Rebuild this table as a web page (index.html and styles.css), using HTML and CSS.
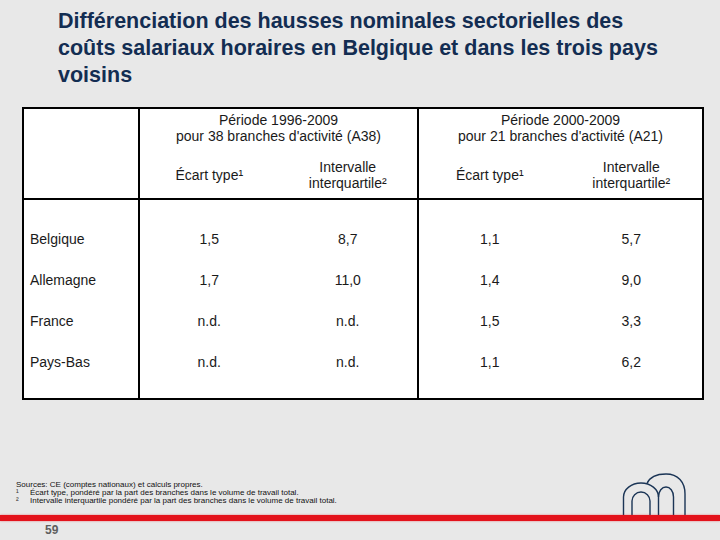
FILE: index.html
```html
<!DOCTYPE html>
<html lang="fr">
<head>
<meta charset="utf-8">
<title>Différenciation des hausses nominales</title>
<link rel="stylesheet" href="styles.css">
</head>
<body>
<div class="slide">
  <h1 class="title">Différenciation des hausses nominales sectorielles des coûts salariaux horaires en Belgique et dans les trois pays voisins</h1>

  <table class="data">
    <colgroup>
      <col class="c-label">
      <col class="c-a">
      <col class="c-a">
      <col class="c-b">
      <col class="c-b">
    </colgroup>
    <thead>
      <tr class="h1">
        <th rowspan="2" class="corner"></th>
        <th colspan="2" class="grp">Période 1996-2009<br>pour 38 branches d'activité (A38)</th>
        <th colspan="2" class="grp">Période 2000-2009<br>pour 21 branches d'activité (A21)</th>
      </tr>
      <tr class="h2">
        <th class="sub grp-start">Écart type¹</th>
        <th class="sub">Intervalle<br>interquartile²</th>
        <th class="sub grp-start">Écart type¹</th>
        <th class="sub">Intervalle<br>interquartile²</th>
      </tr>
    </thead>
    <tbody>
      <tr class="first">
        <td class="label">Belgique</td>
        <td class="grp-start">1,5</td><td>8,7</td>
        <td class="grp-start">1,1</td><td>5,7</td>
      </tr>
      <tr>
        <td class="label">Allemagne</td>
        <td class="grp-start">1,7</td><td>11,0</td>
        <td class="grp-start">1,4</td><td>9,0</td>
      </tr>
      <tr>
        <td class="label">France</td>
        <td class="grp-start">n.d.</td><td>n.d.</td>
        <td class="grp-start">1,5</td><td>3,3</td>
      </tr>
      <tr class="last">
        <td class="label">Pays-Bas</td>
        <td class="grp-start">n.d.</td><td>n.d.</td>
        <td class="grp-start">1,1</td><td>6,2</td>
      </tr>
    </tbody>
  </table>

  <div class="bottom">
    <div class="notes">
      <div class="note-src">Sources: CE (comptes nationaux) et calculs propres.</div>
      <div class="note"><span class="num">¹</span><span>Écart type, pondéré par la part des branches dans le volume de travail total.</span></div>
      <div class="note"><span class="num">²</span><span>Intervalle interquartile pondéré par la part des branches dans le volume de travail total.</span></div>
    </div>
    <svg class="logo" width="70" height="44" viewBox="0 0 70 44" aria-hidden="true">
      <g fill="none" stroke="#1b3556" stroke-width="1.4">
        <path d="M4.5,44 V26 A17.5,14 0 0 1 39.5,26 V44"/>
        <path d="M13,44 V30 A9,9 0 0 1 31,30 V44"/>
        <path d="M28,12.5 C31,5.5 38,3 47,3 C59,3 66,11 66,23 V44"/>
        <path d="M39.5,26 C39.5,20 43,16 47,16 C51,16 54.5,20 54.5,26 V44"/>
      </g>
    </svg>
  </div>
  <div class="rule"></div>
  <div class="pagenum">59</div>
</div>
</body>
</html>
```

FILE: styles.css
```css
html, body {
  margin: 0;
  padding: 0;
}

body {
  background: #e8e8e8;
  font-family: "Liberation Sans", Arial, sans-serif;
}

.slide {
  width: 720px;
  height: 540px;
  display: flex;
  flex-direction: column;
  overflow: hidden;
}

.title {
  margin: 0;
  width: 624px;
  padding: 8px 0 0 58px;
  font-size: 21.5px;
  line-height: 27px;
  font-weight: bold;
  color: #132d52;
}

.data {
  margin: 18px 0 0 22px;
  width: 680px;
  border-collapse: collapse;
  table-layout: fixed;
  background: #fff;
  border: 2px solid #000;
  font-size: 14px;
  line-height: 16px;
  color: #1a1a1a;
}

.c-label { width: 116px; }
.c-a { width: 139.5px; }
.c-b { width: 142.5px; }

.data th {
  font-weight: normal;
  text-align: center;
  padding: 0;
}

.data .corner {
  border-right: 2px solid #000;
  border-bottom: 2px solid #000;
}

.data .h1 th.grp {
  padding: 3px 0 7px;
  border-right: 2px solid #000;
}

.data .h2 th {
  padding: 8px 0 7px;
  border-bottom: 2px solid #000;
}

.data .grp-start {
  border-left: 2px solid #000;
}

.data td {
  text-align: center;
  height: 41px;
  padding: 0;
  vertical-align: middle;
}

.data td.label {
  text-align: left;
  padding-left: 6px;
}

.data tr.first td {
  padding-top: 18px;
}

.data tr.last td {
  padding-bottom: 16px;
}

.bottom {
  flex: 1;
  display: flex;
  justify-content: space-between;
  align-items: flex-end;
  padding: 0 31px 0 16px;
}

.notes {
  padding-bottom: 10px;
  font-size: 8px;
  line-height: 8px;
  color: #111;
}

.note {
  display: flex;
}

.note .num {
  width: 14px;
  flex: none;
}

.logo {
  display: block;
}

.rule {
  height: 6px;
  flex: none;
  background: #e3121b;
  box-shadow: 0 0 2px rgba(227, 18, 27, 0.6);
}

.pagenum {
  flex: none;
  height: 19px;
  line-height: 19px;
  padding-left: 45px;
  font-size: 12px;
  font-weight: bold;
  color: #5f5f5f;
}
```
